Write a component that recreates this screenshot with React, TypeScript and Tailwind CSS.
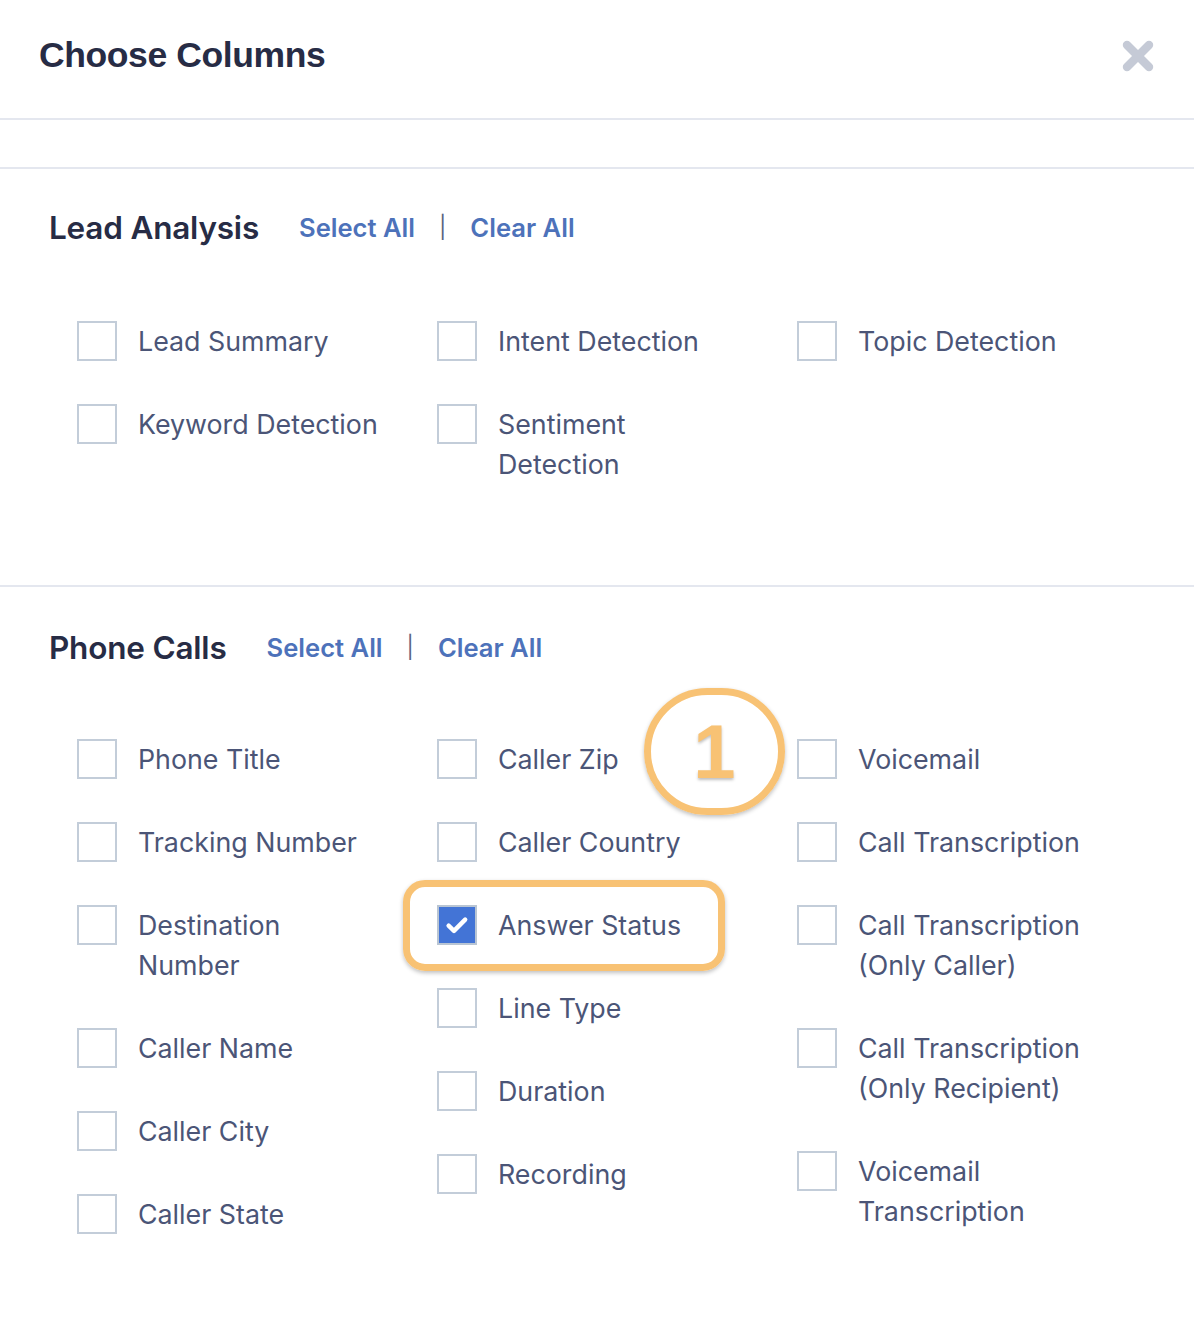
import { X } from "lucide-react";

type Item = { lines: string[]; checked?: boolean };

const leadColumns: Item[][] = [
  [{ lines: ["Lead Summary"] }, { lines: ["Keyword Detection"] }],
  [{ lines: ["Intent Detection"] }, { lines: ["Sentiment", "Detection"] }],
  [{ lines: ["Topic Detection"] }],
];

const phoneColumns: Item[][] = [
  [
    { lines: ["Phone Title"] },
    { lines: ["Tracking Number"] },
    { lines: ["Destination", "Number"] },
    { lines: ["Caller Name"] },
    { lines: ["Caller City"] },
    { lines: ["Caller State"] },
  ],
  [
    { lines: ["Caller Zip"] },
    { lines: ["Caller Country"] },
    { lines: ["Answer Status"], checked: true },
    { lines: ["Line Type"] },
    { lines: ["Duration"] },
    { lines: ["Recording"] },
  ],
  [
    { lines: ["Voicemail"] },
    { lines: ["Call Transcription"] },
    { lines: ["Call Transcription", "(Only Caller)"] },
    { lines: ["Call Transcription", "(Only Recipient)"] },
    { lines: ["Voicemail", "Transcription"] },
  ],
];

function Checkbox({ checked }: { checked?: boolean }) {
  if (checked) {
    return (
      <span className="flex h-[40px] w-[40px] shrink-0 items-center justify-center border-2 border-[#b9c5d3] bg-[#4374d6]">
        <svg width="28" height="28" viewBox="0 0 24 24" fill="none">
          <path
            d="M4.8 12.6l4.6 4.4 9.6-9.6"
            stroke="white"
            strokeWidth="3.8"
            strokeLinecap="round"
            strokeLinejoin="round"
          />
        </svg>
      </span>
    );
  }
  return <span className="h-[40px] w-[40px] shrink-0 border-2 border-[#c3cdd9] bg-white" />;
}

function ColumnGrid({ columns }: { columns: Item[][] }) {
  return (
    <div className="flex pl-[77px]">
      {columns.map((col, i) => (
        <div key={i} className="flex w-[360px] flex-col gap-[43px]">
          {col.map((item) => (
            <label key={item.lines.join(" ")} className="flex items-start gap-[21px]">
              <Checkbox checked={item.checked} />
              <span className="text-[26.8px] leading-[40px] text-[#4b5577]">
                {item.lines.map((line) => (
                  <span key={line} className="block whitespace-nowrap">
                    {line}
                  </span>
                ))}
              </span>
            </label>
          ))}
        </div>
      ))}
    </div>
  );
}

function SectionHeader({ title }: { title: string }) {
  return (
    <div className="flex h-[40px] items-center pl-[49px]">
      <h2 className="text-[31.5px] font-semibold tracking-[-0.2px] text-[#272c45]">{title}</h2>
      <div className="ml-[40px] flex items-center text-[25.6px] font-semibold text-[#4d72ba]">
        <button type="button">Select All</button>
        <span className="mx-[24px] text-[22px] font-normal text-[#5a6480]">|</span>
        <button type="button">Clear All</button>
      </div>
    </div>
  );
}

export default function App() {
  return (
    <div
      className="relative min-h-[1334px] w-[1194px] overflow-hidden bg-white"
      style={{ fontFamily: "Inter, 'Noto Sans', sans-serif" }}
    >
      <header className="flex h-[120px] items-center justify-between border-b-2 border-[#e4e7ef] pb-[6px] pl-[39px] pr-[34px]">
        <h1
          className="text-[35.5px] font-bold tracking-[-0.4px] text-[#272c45]"
          style={{ fontFamily: "'Liberation Sans', Arial, sans-serif" }}
        >
          Choose Columns
        </h1>
        <button type="button" className="text-[#c5cad6]">
          <X size={44} strokeWidth={4.6} />
        </button>
      </header>

      <div className="h-[49px] border-b-2 border-[#e4e7ef]" />

      <section className="border-b-2 border-[#e4e7ef] pb-[101px] pt-[39px]">
        <SectionHeader title="Lead Analysis" />
        <div className="mt-[73px]">
          <ColumnGrid columns={leadColumns} />
        </div>
      </section>

      <section className="pt-[41px]">
        <SectionHeader title="Phone Calls" />
        <div className="mt-[71px]">
          <ColumnGrid columns={phoneColumns} />
        </div>
      </section>

      {/* annotation overlays */}
      <div className="pointer-events-none absolute left-[644px] top-[688px] flex h-[127px] w-[141px] items-center justify-center rounded-full border-[7px] border-[#f8c274] shadow-[0_2px_4px_rgba(0,0,0,0.25)]">
        <span
          className="text-[76px] font-bold leading-none text-[#f8c274] [text-shadow:0_2px_3px_rgba(0,0,0,0.25)]"
          style={{ fontFamily: "'Liberation Sans', Arial, sans-serif" }}
        >
          1
        </span>
      </div>
      <div className="pointer-events-none absolute left-[403px] top-[880px] h-[91px] w-[322px] rounded-[22px] border-[7px] border-[#f8c274] shadow-[0_2px_4px_rgba(0,0,0,0.25)]" />
    </div>
  );
}
